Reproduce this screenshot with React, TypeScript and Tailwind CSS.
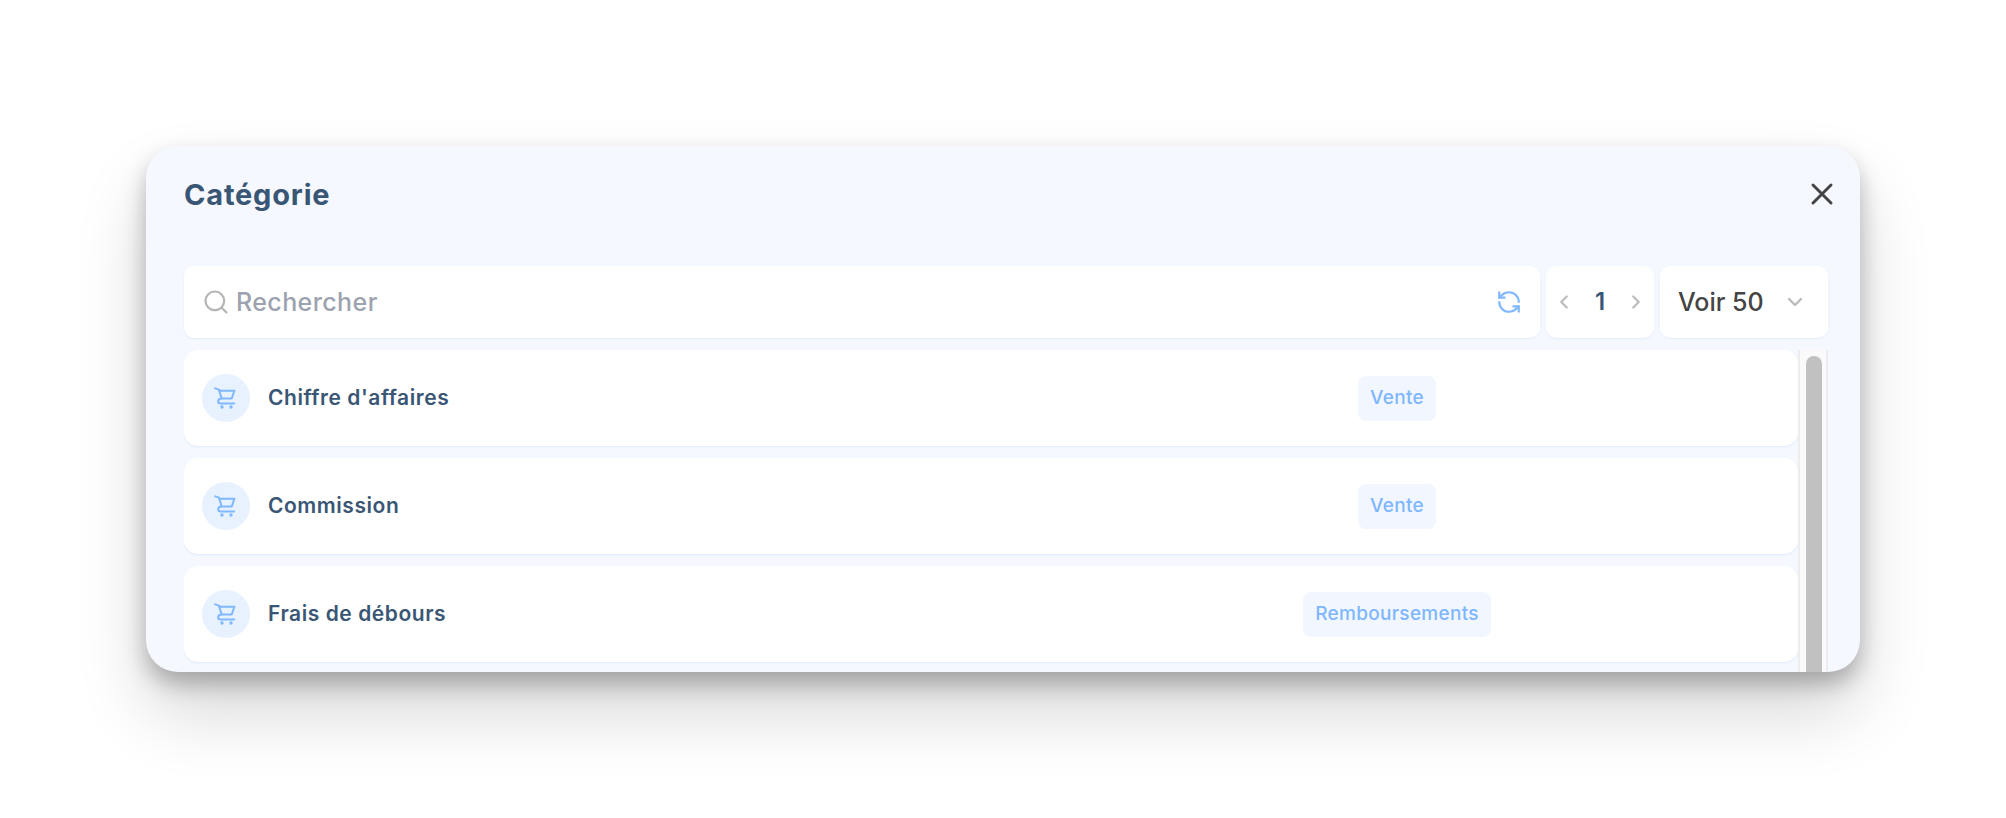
import { ChevronDown, ChevronLeft, ChevronRight, RefreshCcw, Search, X } from "lucide-react";

const rows = [
  { name: "Chiffre d'affaires", tag: "Vente" },
  { name: "Commission", tag: "Vente" },
  { name: "Frais de débours", tag: "Remboursements" },
];

const CartIcon = () => (
  <svg width="24" height="24" viewBox="0 0 24 24" fill="none" stroke="#7fb8ff" strokeWidth="2" strokeLinecap="round" strokeLinejoin="round">
    <path d="M1.2 2.4 5 3.6 7.6 12.4" />
    <path d="M5.4 4.8H20.4L17.8 12.4H7.6C5.6 12.4 4.2 13.6 4.2 15.2C4.2 16.6 5.2 17.4 6.6 17.4H20.2" />
    <circle cx="8" cy="21" r="0.7" fill="#7fb8ff" />
    <circle cx="17" cy="21" r="0.7" fill="#7fb8ff" />
  </svg>
);

export default function App() {
  return (
    <div className="h-[818px] bg-white pl-[146px] pt-[146px] font-['Inter','Liberation_Sans',sans-serif]">
      <div className="flex h-[526px] w-[1714px] flex-col overflow-hidden rounded-[32px] bg-[#f5f9ff] pl-[38px] pr-[32px] shadow-[0_12px_22px_rgba(0,0,0,0.26),0_40px_70px_rgba(0,0,0,0.16)]">
        <div className="flex h-[120px] shrink-0 items-start justify-between pt-[26px]">
          <h2 className="text-[29px] font-bold leading-[46px] tracking-[0.8px] text-[#3a5675]">Catégorie</h2>
          <X size={36} strokeWidth={2} className="-mr-[12px] mt-[4px] text-[#444444]" />
        </div>

        <div className="flex h-[72px] shrink-0 gap-[6px]">
          <div className="flex flex-1 items-center rounded-[10px] bg-white pl-[18px] pr-[18px] shadow-[0_1px_2px_rgba(120,170,240,0.15)]">
            <Search size={28} strokeWidth={1.9} className="text-[#b5b5b5]" />
            <span className="ml-[6px] mt-[2px] flex-1 text-[25px] font-medium tracking-[0.4px] text-[#9ca3af]">Rechercher</span>
            <RefreshCcw size={26} strokeWidth={2} className="text-[#7fb8ff]" />
          </div>
          <div className="flex w-[108px] items-center justify-between rounded-[10px] bg-white px-[7px] shadow-[0_1px_2px_rgba(120,170,240,0.15)]">
            <ChevronLeft size={22} strokeWidth={2.4} className="text-[#bbbbbb]" />
            <span className="text-[24px] font-semibold text-[#3a5675]">1</span>
            <ChevronRight size={22} strokeWidth={2.4} className="text-[#bbbbbb]" />
          </div>
          <div className="flex w-[168px] items-center rounded-[10px] bg-white pl-[18px] shadow-[0_1px_2px_rgba(120,170,240,0.15)]">
            <span className="mt-[1px] w-[105px] text-[25px] font-medium text-[#444444]">Voir 50</span>
            <ChevronDown size={24} strokeWidth={2.4} className="text-[#bbbbbb]" />
          </div>
        </div>

        <div className="mt-[12px] flex min-h-0 flex-1">
          <div className="flex min-w-0 flex-1 flex-col gap-[12px] overflow-hidden">
            {rows.map((row) => (
              <div key={row.name} className="flex h-[96px] shrink-0 items-center rounded-[14px] bg-white pl-[18px] shadow-[0_1px_2px_rgba(120,170,240,0.2)]">
                <div className="flex h-[48px] w-[48px] shrink-0 items-center justify-center rounded-full bg-[#e8f2ff]">
                  <CartIcon />
                </div>
                <span className="ml-[18px] flex-1 text-[21px] font-semibold tracking-[0.55px] text-[#3a5675]">{row.name}</span>
                <div className="flex w-[802px] shrink-0 justify-center">
                  <span className="flex h-[45px] items-center rounded-[8px] bg-[#f2f7ff] px-[12px] text-[19px] font-medium tracking-[0.3px] text-[#7eb6ff]">{row.tag}</span>
                </div>
              </div>
            ))}
          </div>
          <div className="w-[30px] shrink-0 border-x-2 border-[#ededed] bg-[#fafafa] pl-[6px] pr-[4px] pt-[6px]">
            <div className="h-[400px] rounded-t-[8px] bg-[#c1c1c1]" />
          </div>
        </div>
      </div>
    </div>
  );
}
